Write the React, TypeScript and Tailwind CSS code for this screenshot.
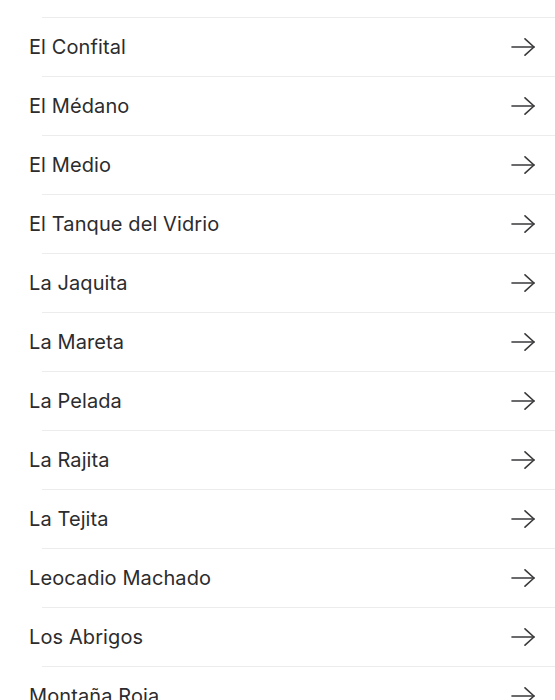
const places = [
  "El Cabezo",
  "El Confital",
  "El Médano",
  "El Medio",
  "El Tanque del Vidrio",
  "La Jaquita",
  "La Mareta",
  "La Pelada",
  "La Rajita",
  "La Tejita",
  "Leocadio Machado",
  "Los Abrigos",
  "Montaña Roja",
];

const Arrow = () => (
  <svg width="24" height="18" viewBox="0 0 24 18" fill="none" stroke="#3a3a3c" strokeWidth="1.6" strokeLinecap="round" strokeLinejoin="round">
    <path d="M1 9H23" />
    <path d="M14 0.8L23 9L14 17.2" />
  </svg>
);

export default function App() {
  return (
    <div className="h-[700px] w-[555px] overflow-hidden bg-white" style={{ fontFamily: "Inter, 'Noto Sans', sans-serif" }}>
      <ul className="-mt-[41px]">
        {places.map((name) => (
          <li key={name}>
            <div className="flex h-[58px] items-center justify-between pl-[29px] pr-[20px]">
              <span className="text-[20px] text-[#2c2c2e] tracking-[0.1px]">{name}</span>
              <Arrow />
            </div>
            <div className="ml-[42px] h-px bg-[#ececec]" />
          </li>
        ))}
      </ul>
    </div>
  );
}
